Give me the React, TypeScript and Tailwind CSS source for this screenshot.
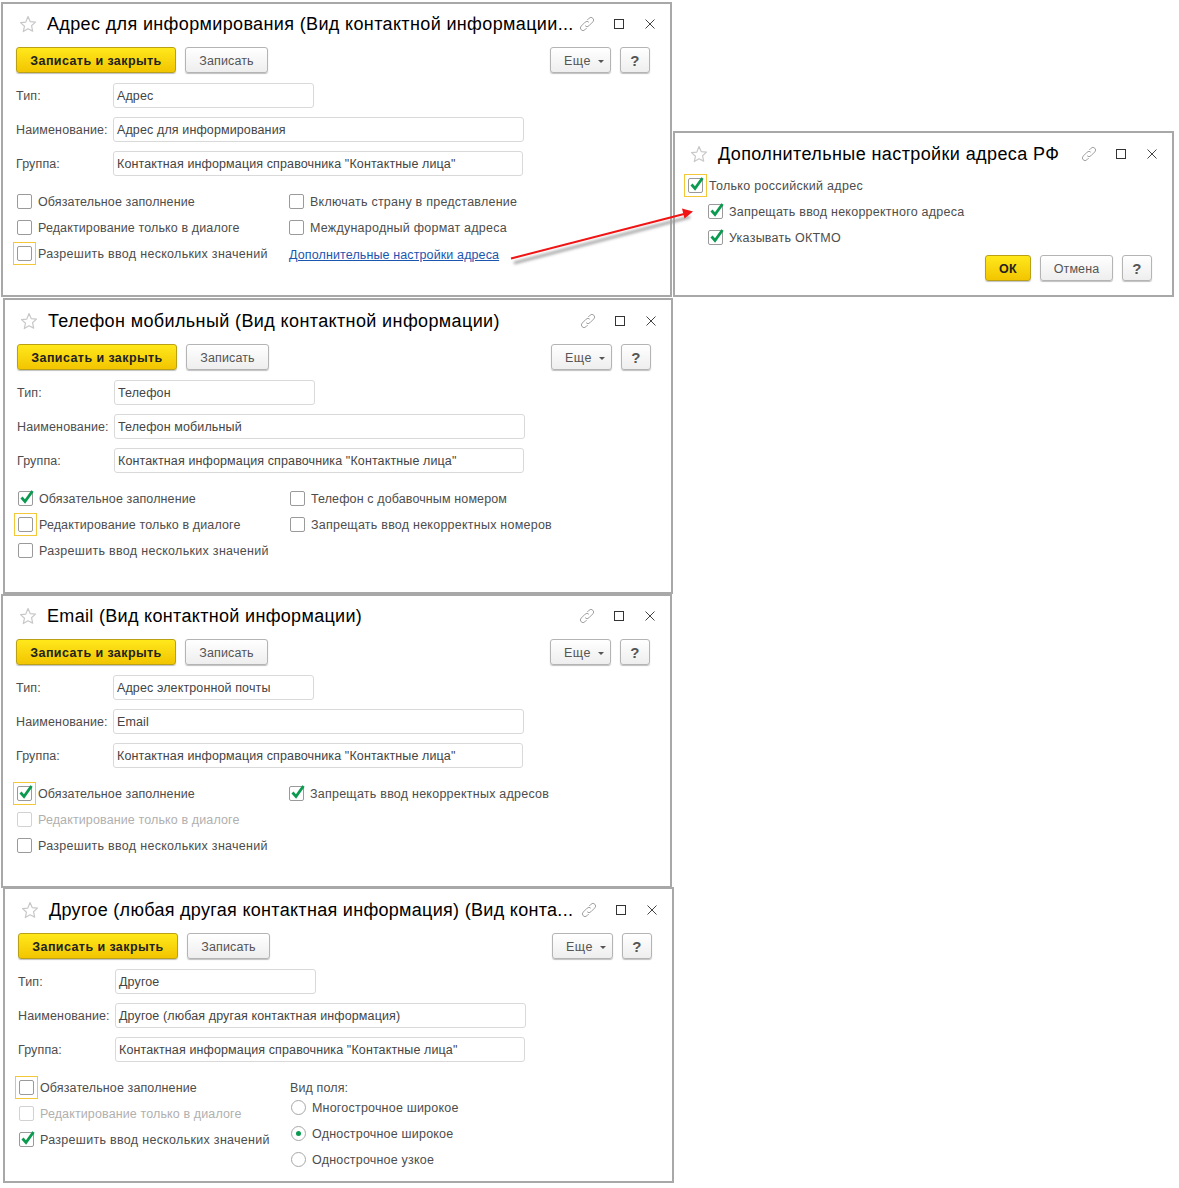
import clsx from 'clsx'
import type { ReactNode } from 'react'

function Star() {
  return (
    <svg width="18" height="18" viewBox="0 0 18 18" className="shrink-0">
      <path d="M9 1.500l2.200 5.100 5.300.5-4 3.600 1.200 5.400L9 13.800l-4.700 2.800 1.200-5.400-4-3.600 5.300-.5z" fill="#fff" stroke="#c8c8c8" strokeWidth="1.200" strokeLinejoin="round" />
    </svg>
  )
}

function WindowIcons() {
  return (
    <div className="flex items-center shrink-0 ml-[6px]">
      <svg width="16" height="16" viewBox="0 0 16 16" fill="none" stroke="#a0a0a0" strokeWidth="1">
        <path d="M6.200 9.800a2.600 2.600 0 0 0 3.700 0l3.900-3.900a2.600 2.600 0 0 0-3.700-3.700L8.300 4" />
        <path d="M9.800 6.200a2.600 2.600 0 0 0-3.700 0l-3.900 3.900a2.600 2.600 0 0 0 3.700 3.700L7.700 12" />
      </svg>
      <span className="ml-[19px] size-[10px] border border-[#333]" />
      <svg width="10" height="10" viewBox="0 0 10 10" className="ml-[21px]" stroke="#444" strokeWidth="1">
        <path d="M.5.500l9 9M9.500.500l-9 9" />
      </svg>
    </div>
  )
}

function Btn({ children, primary, className }: { children: ReactNode; primary?: boolean; className?: string }) {
  return (
    <div
      className={clsx(
        'h-[26px] pt-[2px] flex items-center justify-center rounded-[3px] border shadow-[0_1px_1px_rgba(0,0,0,0.25)]',
        primary
          ? 'bg-gradient-to-b from-[#ffe81a] to-[#f2c500] border-[#b9a014] font-bold text-[#222] tracking-[0.42px]'
          : 'bg-gradient-to-b from-white to-[#eeeeee] border-[#b4b4b4] text-[#555]',
        className,
      )}
    >
      {children}
    </div>
  )
}

function Field({ label, value, className }: { label: string; value: string; className: string }) {
  return (
    <div className="flex items-center h-[25px]">
      <div className="w-[97px] shrink-0 pt-[2px] text-[#4d4d4d]">{label}</div>
      <div className={clsx('h-[25px] flex items-center pl-[3px] pt-[2px] rounded-[3px] border border-[#d9d9d9] text-[#444]', className)}>{value}</div>
    </div>
  )
}

interface CheckProps {
  label: string
  checked?: boolean
  focus?: boolean
  disabled?: boolean
  wide?: boolean
  mid?: boolean
}

function Check({ label, checked, focus, disabled, wide, mid }: CheckProps) {
  return (
    <div className={clsx('h-[26px] flex items-center pl-px whitespace-nowrap', disabled ? 'text-[#b0b0b0]' : 'text-[#4d4d4d]')}>
      <span className={clsx('relative size-[15px] shrink-0 rounded-[2px] border bg-white', disabled ? 'border-[#d2d2d2]' : 'border-[#9a9a9a]')}>
        {focus && <span className="absolute -inset-[5px] border border-[#f2c73a]" />}
        {checked && (
          <svg width="16" height="16" viewBox="0 0 16 16" className="absolute left-[0px] -top-[3px]" fill="none" stroke="#0a9a50" strokeWidth="2.800">
            <path d="M2.500 8.500l3.500 4 7.500-10.500" />
          </svg>
        )}
      </span>
      <span className={clsx('ml-[6px] pt-[2px]', wide && 'tracking-[0.3px]', mid && 'tracking-[0.24px]')}>{label}</span>
    </div>
  )
}

function Radio({ label, selected }: { label: string; selected?: boolean }) {
  return (
    <div className="h-[26px] flex items-center pl-px text-[#4d4d4d] whitespace-nowrap">
      <span className="size-[15px] shrink-0 rounded-full border border-[#a8a8a8] bg-white flex items-center justify-center">
        {selected && <span className="size-[5px] rounded-full bg-[#0a9a50]" />}
      </span>
      <span className="ml-[6px] pt-[2px] tracking-[0.2px]">{label}</span>
    </div>
  )
}

function TitleRow({ title, titleClass }: { title: string; titleClass?: string }) {
  return (
    <div className="h-[40px] flex items-center">
      <Star />
      <div className={clsx('ml-[10px] shrink-0 text-[18px] text-black whitespace-nowrap', titleClass)}>{title}</div>
      <WindowIcons />
    </div>
  )
}

interface FormWindowProps {
  className: string
  title: string
  titleClass?: string
  type: string
  name: string
  left: ReactNode
  right: ReactNode
}

function FormWindow({ className, title, titleClass, type, name, left, right }: FormWindowProps) {
  return (
    <div className={clsx('absolute bg-white border-2 border-[#a8a8a8] pr-[20px]', className)}>
      <div className="pl-[3px]">
        <TitleRow title={title} titleClass={clsx('w-[526px]', titleClass ?? 'tracking-[0.36px]')} />
      </div>
      <div className="mt-[3px] flex items-center">
        <Btn primary className="w-[160px]">Записать и закрыть</Btn>
        <Btn className="ml-[9px] w-[83px]">Записать</Btn>
        <Btn className="ml-auto w-[61px] !justify-start pl-[13px] tracking-[0.5px]">
          Еще
          <span className="ml-[7px] mt-[1px] border-x-[3px] border-t-[3px] border-x-transparent border-t-[#555]" />
        </Btn>
        <Btn className="ml-[9px] w-[30px] font-bold text-[15px] text-[#333]">?</Btn>
      </div>
      <div className="mt-[10px] flex flex-col gap-[9px]">
        <Field label="Тип:" value={type} className="w-[201px]" />
        <Field label="Наименование:" value={name} className="w-[411px]" />
        <Field label="Группа:" value={'Контактная информация справочника "Контактные лица"'} className="w-[410px]" />
      </div>
      <div className="mt-[12px] flex">
        <div className="w-[272px] shrink-0">{left}</div>
        <div>{right}</div>
      </div>
    </div>
  )
}

function Arrow() {
  return (
    <svg width="1179" height="1188" className="absolute left-0 top-0 pointer-events-none">
      <defs>
        <filter id="arrow-blur" x="-20%" y="-50%" width="140%" height="200%">
          <feGaussianBlur stdDeviation="1.500" />
        </filter>
      </defs>
      <path d="M514 263L690 217" stroke="#9a9a9a" strokeWidth="2.500" fill="none" filter="url(#arrow-blur)" />
      <path d="M511 258.500L684 214" stroke="#f01414" strokeWidth="2" fill="none" />
      <path d="M693 211.500L682 208.500L684.500 218.500z" fill="#f01414" />
    </svg>
  )
}

export default function App() {
  return (
    <div className="relative w-[1179px] h-[1188px] bg-white overflow-hidden font-['Liberation_Sans',Arial,sans-serif] text-[12.5px] tracking-[0.12px]">
      <FormWindow
        className="left-[1px] top-[2px] w-[671px] h-[295px] pl-[13px]"
        title="Адрес для информирования (Вид контактной информации..."
        type="Адрес"
        name="Адрес для информирования"
        left={
          <>
            <Check label="Обязательное заполнение" />
            <Check label="Редактирование только в диалоге" />
            <Check label="Разрешить ввод нескольких значений" focus wide />
          </>
        }
        right={
          <>
            <Check label="Включать страну в представление" mid />
            <Check label="Международный формат адреса" mid />
            <div className="h-[26px] flex items-center pl-px pt-[4px] text-[#1a56b0] underline">Дополнительные настройки адреса</div>
          </>
        }
      />
      <FormWindow
        className="left-[3px] top-[298px] w-[670px] h-[296px] pl-[12px] pt-[1px]"
        title="Телефон мобильный (Вид контактной информации)"
        titleClass="tracking-[0.38px]"
        type="Телефон"
        name="Телефон мобильный"
        left={
          <>
            <Check label="Обязательное заполнение" checked />
            <Check label="Редактирование только в диалоге" focus />
            <Check label="Разрешить ввод нескольких значений" wide />
          </>
        }
        right={
          <>
            <Check label="Телефон с добавочным номером" />
            <Check label="Запрещать ввод некорректных номеров" mid />
          </>
        }
      />
      <FormWindow
        className="left-[1px] top-[594px] w-[671px] h-[294px] pl-[13px]"
        title="Email (Вид контактной информации)"
        titleClass="tracking-[0.32px]"
        type="Адрес электронной почты"
        name="Email"
        left={
          <>
            <Check label="Обязательное заполнение" checked focus />
            <Check label="Редактирование только в диалоге" disabled />
            <Check label="Разрешить ввод нескольких значений" wide />
          </>
        }
        right={<Check label="Запрещать ввод некорректных адресов" checked mid />}
      />
      <FormWindow
        className="left-[3px] top-[887px] w-[671px] h-[296px] pl-[13px] pt-[1px]"
        title="Другое (любая другая контактная информация) (Вид конта..."
        titleClass="tracking-[0.3px]"
        type="Другое"
        name="Другое (любая другая контактная информация)"
        left={
          <>
            <Check label="Обязательное заполнение" focus />
            <Check label="Редактирование только в диалоге" disabled />
            <Check label="Разрешить ввод нескольких значений" checked wide />
          </>
        }
        right={
          <>
            <div className="h-[26px] -mb-[6px] pt-[2px] flex items-center text-[#4d4d4d]">Вид поля:</div>
            <Radio label="Многострочное широкое" />
            <Radio label="Однострочное широкое" selected />
            <Radio label="Однострочное узкое" />
          </>
        }
      />
      <div className="absolute left-[673px] top-[131px] w-[501px] h-[166px] bg-white border-2 border-[#a8a8a8] pt-[1px] pl-[13px] pr-[20px]">
        <div className="pl-[2px]">
          <TitleRow title="Дополнительные настройки адреса РФ" titleClass="w-[357px] tracking-[0.4px]" />
        </div>
        <div className="-mt-[2px] -ml-[1px]">
          <Check label="Только российский адрес" checked focus wide />
          <div className="pl-[20px]">
            <Check label="Запрещать ввод некорректного адреса" checked mid />
            <Check label="Указывать ОКТМО" checked mid />
          </div>
        </div>
        <div className="mt-[5px] flex justify-end gap-[9px]">
          <Btn primary className="w-[46px]">ОК</Btn>
          <Btn className="w-[73px]">Отмена</Btn>
          <Btn className="w-[30px] font-bold text-[15px] text-[#333]">?</Btn>
        </div>
      </div>
      <Arrow />
    </div>
  )
}
